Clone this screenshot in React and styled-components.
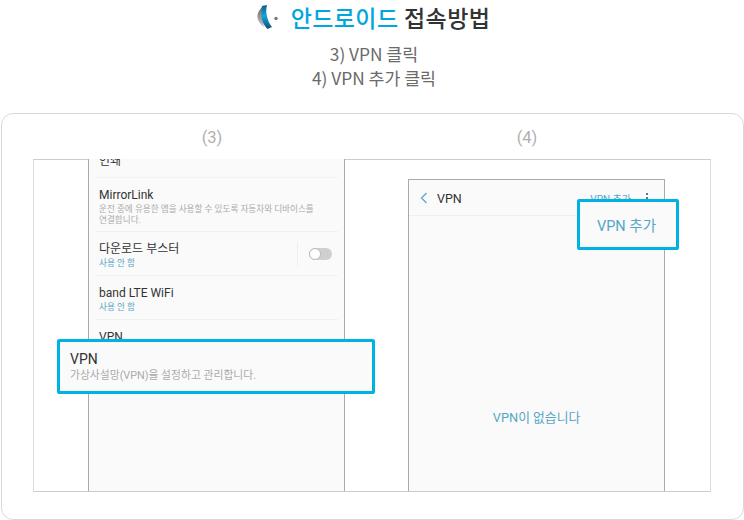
import React from "react";
import styled, { createGlobalStyle } from "styled-components";

const GlobalStyle = createGlobalStyle`
  html, body {
    margin: 0;
    padding: 0;
    background: #fff;
    font-family: "Noto Sans CJK KR", "Noto Sans", sans-serif;
  }
  * {
    box-sizing: border-box;
  }
`;

const Page = styled.div`
  width: 744px;
  height: 520px;
  overflow: hidden;
  display: flex;
  flex-direction: column;
  align-items: center;
`;

const TitleRow = styled.div`
  display: flex;
  align-items: center;
  height: 34px;
  margin-left: 2px;
  gap: 11px;
`;

const Title = styled.h1`
  margin: 0;
  font-size: 23px;
  font-weight: 500;
  letter-spacing: 0.4px;
  line-height: 34px;
  color: #333;
`;

const Accent = styled.span`
  color: #00a7dd;
`;

const Sub = styled.p`
  margin: 8px 0 0;
  padding-left: 4px;
  font-size: 17.3px;
  line-height: 24px;
  color: #6a6a6a;
  text-align: center;
`;

const Card = styled.section`
  width: 743px;
  height: 407px;
  margin-top: 23px;
  margin-left: 1px;
  border: 1.5px solid #d8d8d8;
  border-radius: 12px;
  padding-left: 31px;
  display: flex;
  flex-direction: column;
`;

const StepRow = styled.div`
  display: flex;
  height: 45px;
  padding-top: 12px;
`;

const StepLabel = styled.div`
  width: ${(p) => p.$w}px;
  text-align: center;
  font-family: "Roboto", "Noto Sans CJK KR", sans-serif;
  font-size: 16.5px;
  line-height: 24px;
  color: #b0b0b0;
`;

const Frame = styled.div`
  position: relative;
  width: 678px;
  height: 333px;
  border-top: 1px solid #ccc;
  border-bottom: 1.5px solid #ccc;
  border-left: 1.5px solid #ddd;
  border-right: 1.5px solid #ddd;
  display: flex;
  align-items: flex-end;
  padding-left: 54px;
  font-family: "Roboto", "Noto Sans CJK KR", sans-serif;
`;

const Phone = styled.div`
  width: 257px;
  height: ${(p) => p.$h}px;
  margin-left: ${(p) => p.$ml || 0}px;
  background: #fafafa;
  border-left: 1.5px solid #aaa;
  border-right: 1.5px solid #aaa;
  border-top: ${(p) => (p.$top ? "1.5px solid #aaa" : "none")};
  overflow: hidden;
  display: flex;
  flex-direction: column;
  padding: ${(p) => (p.$top ? "0" : "0 6px")};
`;

const ListRow = styled.div`
  height: ${(p) => p.$h}px;
  flex-shrink: 0;
  padding: ${(p) => p.$pt || 0}px 0 0 4px;
  border-bottom: 1px solid #f1f1f1;
  display: flex;
  overflow: hidden;
  align-items: flex-start;
`;

const RowText = styled.div`
  flex: 1;
`;

const RowTitle = styled.div`
  font-size: 12px;
  line-height: 15px;
  color: #333;
`;

const RowDesc = styled.div`
  font-size: 8.6px;
  line-height: 11px;
  margin-top: 1px;
  color: ${(p) => (p.$on ? "#55a6c6" : "#aaa")};
`;

// the list is scrolled, only the lower half of this row's title still shows
const ClippedTitle = styled(RowTitle)`
  margin-top: -5px;
`;

const ToggleWrap = styled.div`
  width: 35px;
  height: 24px;
  margin: 0 6px 0 0;
  border-left: 1px solid #eee;
  display: flex;
  align-items: center;
  justify-content: flex-end;
`;

const Toggle = styled.div`
  width: 23px;
  height: 12px;
  border-radius: 6px;
  background: #cfcfcf;
`;

const Knob = styled.div`
  width: 12px;
  height: 12px;
  border-radius: 50%;
  background: #fff;
  border: 1px solid #bbb;
`;

const AppBar = styled.div`
  height: 36px;
  flex-shrink: 0;
  border-bottom: 1.5px solid #eee;
  display: flex;
  align-items: center;
  padding: 1px 16px 0 11px;
`;

const BarTitle = styled.div`
  font-size: 12.5px;
  color: #333;
  margin-left: 9px;
  flex: 1;
`;

const BarAction = styled.div`
  font-size: 10px;
  color: #55a6c6;
`;

const Dots = styled.div`
  display: flex;
  flex-direction: column;
  gap: 2px;
  margin-left: 15px;
`;

const Dot = styled.i`
  width: 2px;
  height: 2px;
  background: #55788a;
  display: block;
`;

const EmptyBody = styled.div`
  flex: 1;
  padding-top: 193px;
  text-align: center;
  font-size: 12.8px;
  line-height: 18px;
  color: #55a6c6;
`;

const Callout = styled.div`
  position: absolute;
  left: ${(p) => p.$x}px;
  top: ${(p) => p.$y}px;
  width: ${(p) => p.$w}px;
  height: ${(p) => p.$h}px;
  background: #fafafa;
  border: 3px solid #00b2e3;
  border-radius: 2px;
`;

const VpnCallout = styled(Callout)`
  padding: 8px 0 0 10px;
`;

const VpnTitle = styled.div`
  font-size: 14px;
  line-height: 18px;
  color: #333;
`;

const VpnDesc = styled.div`
  font-size: 10.8px;
  line-height: 15px;
  color: #aaa;
`;

const AddCallout = styled(Callout)`
  display: flex;
  align-items: center;
  justify-content: center;
  padding-right: 3px;
  font-size: 14.5px;
  color: #55a6c6;
`;

const Logo = () => (
  <svg width="24" height="26" viewBox="0 0 24 26">
    <defs>
      <linearGradient id="blueArc" x1="0" y1="0" x2="0" y2="1">
        <stop offset="0" stopColor="#0f5c86" />
        <stop offset="0.45" stopColor="#12a6dc" />
        <stop offset="1" stopColor="#0f4f78" />
      </linearGradient>
      <linearGradient id="greyArc" x1="0" y1="0" x2="0" y2="1">
        <stop offset="0" stopColor="#666" />
        <stop offset="1" stopColor="#c4c4c4" />
      </linearGradient>
    </defs>
    <path d="M8 1.5 C3.5 5 1 9.5 1.5 13.5 C2 17.5 4.5 20.5 8 23 C7 18 6 14 6.5 10 C7 6.5 7.5 4 8 1.5 Z" fill="url(#greyArc)" />
    <path d="M6 2 L11 1 C10 5 10 9 11 12.5 C12 16.5 13.5 20.5 16 23 L11.5 25 C8 21.5 5.5 17 5.5 12 C5.5 8 5.5 5 6 2 Z" fill="url(#blueArc)" />
    <circle cx="20" cy="14.5" r="1.7" fill="#777" />
  </svg>
);

const Chevron = () => (
  <svg width="8" height="12" viewBox="0 0 8 12">
    <path d="M6.5 1 L1.5 6 L6.5 11" fill="none" stroke="#55a6c6" strokeWidth="1.2" />
  </svg>
);

const App = () => {
  return (
    <Page>
      <GlobalStyle />
      <TitleRow>
        <Logo />
        <Title>
          <Accent>안드로이드</Accent> 접속방법
        </Title>
      </TitleRow>
      <Sub>
        3) VPN 클릭
        <br />
        4) VPN 추가 클릭
      </Sub>
      <Card>
        <StepRow>
          <StepLabel $w={358}>(3)</StepLabel>
          <StepLabel $w={272}>(4)</StepLabel>
        </StepRow>
        <Frame>
          <Phone $h={332}>
            <ListRow $h={19}>
              <ClippedTitle>인쇄</ClippedTitle>
            </ListRow>
            <ListRow $h={54} $pt={10}>
              <RowText>
                <RowTitle>MirrorLink</RowTitle>
                <RowDesc>
                  운전 중에 유용한 앱을 사용할 수 있도록 자동차와 디바이스를
                  <br />
                  연결합니다.
                </RowDesc>
              </RowText>
            </ListRow>
            <ListRow $h={44} $pt={10}>
              <RowText>
                <RowTitle>다운로드 부스터</RowTitle>
                <RowDesc $on>사용 안 함</RowDesc>
              </RowText>
              <ToggleWrap>
                <Toggle>
                  <Knob />
                </Toggle>
              </ToggleWrap>
            </ListRow>
            <ListRow $h={44} $pt={10}>
              <RowText>
                <RowTitle>band LTE WiFi</RowTitle>
                <RowDesc $on>사용 안 함</RowDesc>
              </RowText>
            </ListRow>
            <ListRow $h={44} $pt={10}>
              <RowText>
                <RowTitle>VPN</RowTitle>
              </RowText>
            </ListRow>
          </Phone>
          <Phone $h={312} $ml={63} $top>
            <AppBar>
              <Chevron />
              <BarTitle>VPN</BarTitle>
              <BarAction>VPN 추가</BarAction>
              <Dots>
                <Dot />
                <Dot />
                <Dot />
              </Dots>
            </AppBar>
            <EmptyBody>VPN이 없습니다</EmptyBody>
          </Phone>
          <VpnCallout $x={23} $y={179} $w={318} $h={55}>
            <VpnTitle>VPN</VpnTitle>
            <VpnDesc>가상사설망(VPN)을 설정하고 관리합니다.</VpnDesc>
          </VpnCallout>
          <AddCallout $x={543} $y={39} $w={102} $h={51}>
            VPN 추가
          </AddCallout>
        </Frame>
      </Card>
    </Page>
  );
};

export default App;
